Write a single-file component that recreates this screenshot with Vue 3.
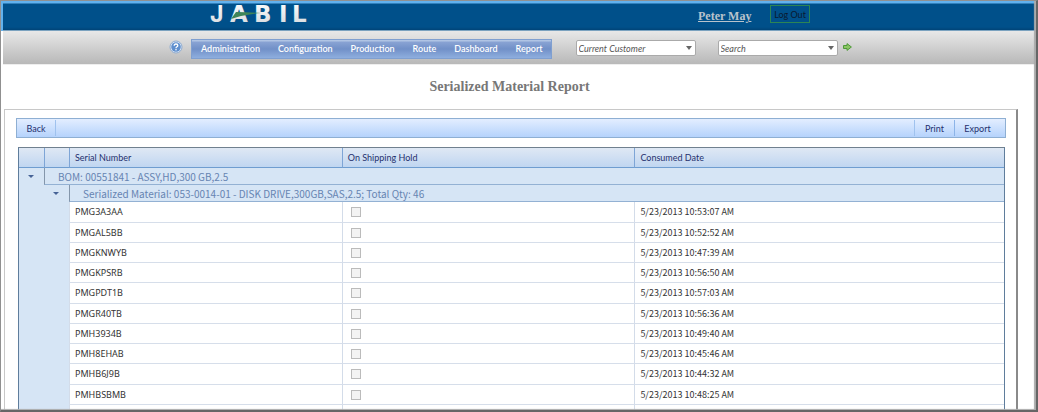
<script setup>
import { ref } from 'vue'

const menu = ['Administration', 'Configuration', 'Production', 'Route', 'Dashboard', 'Report']
const customer = ref('Current Customer')
const search = ref('Search')
const rows = [
  ['PMG3A3AA', '5/23/2013 10:53:07 AM'],
  ['PMGAL5BB', '5/23/2013 10:52:52 AM'],
  ['PMGKNWYB', '5/23/2013 10:47:39 AM'],
  ['PMGKPSRB', '5/23/2013 10:56:50 AM'],
  ['PMGPDT1B', '5/23/2013 10:57:03 AM'],
  ['PMGR40TB', '5/23/2013 10:56:36 AM'],
  ['PMH3934B', '5/23/2013 10:49:40 AM'],
  ['PMH8EHAB', '5/23/2013 10:45:46 AM'],
  ['PMHB6J9B', '5/23/2013 10:44:32 AM'],
  ['PMHBSBMB', '5/23/2013 10:48:25 AM'],
  ['PMHBAGVB', '5/23/2013 10:45:02 AM'],
]
</script>

<template>
  <div class="page">
    <header class="banner">
      <svg class="logo" width="104" height="30" viewBox="0 0 104 30" role="img" aria-label="JABIL">
        <defs>
          <linearGradient id="silver" x1="0" y1="0" x2="0" y2="1">
            <stop offset="0" stop-color="#ffffff" />
            <stop offset="1" stop-color="#d4d8dc" />
          </linearGradient>
        </defs>
        <g fill="url(#silver)">
          <text class="letter round" x="0" y="22">J</text>
          <text class="letter" x="20" y="22">A</text>
          <text class="letter" x="44" y="22">B</text>
          <text class="letter" x="69" y="22">I</text>
          <text class="letter" x="82" y="22">L</text>
        </g>
        <path d="M26 12 Q38 12 51 13 Q36 14 21 19 Z" fill="#3f8558" />
      </svg>
      <a class="user" href="#">Peter May</a>
      <button class="logout" type="button">Log Out</button>
    </header>

    <div class="navbar">
      <button class="help" type="button" aria-label="Help">
        <svg width="14" height="14" viewBox="0 0 14 14" aria-hidden="true">
          <circle cx="7" cy="7" r="6" fill="#e3ecf7" stroke="#8eabd0" />
          <circle cx="7" cy="7" r="4.8" fill="#5f8fce" />
          <path d="M5.2 5.7 Q5.2 4 7 4 Q8.8 4 8.8 5.5 Q8.8 6.4 7.6 7 Q7 7.3 7 8.2" fill="none" stroke="#fff" stroke-width="1.3" />
          <circle cx="7" cy="9.8" r=".8" fill="#fff" />
        </svg>
      </button>
      <nav class="menu">
        <a v-for="item in menu" :key="item" href="#">{{ item }}</a>
      </nav>
      <div class="combo customer">
        <input v-model="customer" type="text" aria-label="Current customer" />
        <button type="button" aria-label="Show customers"><span class="caret"></span></button>
      </div>
      <div class="combo search">
        <input v-model="search" type="text" aria-label="Search" />
        <button type="button" aria-label="Show searches"><span class="caret"></span></button>
      </div>
      <button class="go" type="button" aria-label="Go">
        <svg width="9" height="8" viewBox="0 0 9 8" aria-hidden="true">
          <path d="M.5 2.5 H4 V.6 L8.4 4 L4 7.4 V5.5 H.5 Z" fill="#8cc566" stroke="#4e9a38" />
        </svg>
      </button>
    </div>

    <h1>Serialized Material Report</h1>

    <main class="panel">
      <div class="toolbar">
        <button type="button" class="back">Back</button>
        <button type="button" class="print">Print</button>
        <button type="button" class="export">Export</button>
      </div>

      <table>
        <colgroup>
          <col class="c-arrow" />
          <col class="c-indent" />
          <col class="c-serial" />
          <col class="c-hold" />
          <col />
        </colgroup>
        <thead>
          <tr>
            <th></th>
            <th></th>
            <th scope="col">Serial Number</th>
            <th scope="col">On Shipping Hold</th>
            <th scope="col">Consumed Date</th>
          </tr>
        </thead>
        <tbody>
          <tr class="group">
            <td class="gutter"><button type="button" aria-label="Collapse BOM"><span class="caret small"></span></button></td>
            <td class="label" colspan="4">BOM: 00551841 - ASSY,HD,300 GB,2.5</td>
          </tr>
          <tr class="group">
            <td class="gutter"></td>
            <td class="gutter"><button type="button" aria-label="Collapse material"><span class="caret small"></span></button></td>
            <td class="label" colspan="3">Serialized Material: 053-0014-01 - DISK DRIVE,300GB,SAS,2.5; Total Qty: 46</td>
          </tr>
        </tbody>
        <tbody class="data">
          <tr v-for="[serial, date] in rows" :key="serial">
            <td class="gutter"></td>
            <td class="gutter"></td>
            <td>{{ serial }}</td>
            <td><input type="checkbox" disabled :aria-label="'On shipping hold ' + serial" /></td>
            <td class="date">{{ date }}</td>
          </tr>
        </tbody>
      </table>
    </main>
    <div class="frame" aria-hidden="true"></div>
  </div>
</template>

<style>
body {
  margin: 0;
  background: #fff;
}
</style>

<style scoped>
* {
  box-sizing: border-box;
}
.page {
  height: 100vh;
  overflow: hidden;
  font-family: Lato, "Open Sans", sans-serif;
  font-size: 9px;
  color: #333;
}
button {
  font: inherit;
  color: inherit;
  background: none;
  border: 0;
  padding: 0;
}
.banner {
  display: flex;
  align-items: flex-start;
  height: 31px;
  padding-left: 207px;
  border-left: 3px solid #62b2ee;
  background: linear-gradient(#8c9aa5 0 1px, #62b2ee 1px 3px, #00508a 4px 27px, #004478 30px, #7ba2bf 30px);
}
.logo {
  margin-right: 384px;
  flex: none;
}
.letter {
  font: bold 23px "DejaVu Sans", sans-serif;
}
.letter.round {
  font-family: Inter, "Liberation Sans", sans-serif;
}
.user {
  margin-top: 9px;
  width: 72px;
  font: bold 12px/14px "Liberation Serif", serif;
  color: #b9c3cc;
  white-space: nowrap;
}
.logout {
  height: 18px;
  width: 40px;
  margin-top: 5px;
  border: 1px solid #2c8555;
  color: #0a1a30;
}
.navbar {
  display: flex;
  align-items: center;
  height: 34px;
  margin-left: 3px;
  padding-left: 166px;
  background: linear-gradient(#e8e8e8, #b8b8b8 33px, #eee 33px);
}
.help {
  width: 14px;
  height: 14px;
  margin-bottom: 2px;
}
.help svg,
.go svg {
  display: block;
}
.menu {
  display: flex;
  height: 20px;
  margin: 1px 24px 0 8px;
  padding: 0 0 0 1px;
  border: 1px solid #7f9fd0;
  background: linear-gradient(#b0c4e4 0 1px, #89a3d3 2px, #7190c8 9px, #8eaede);
}
.menu a {
  padding: 0 10px 0 8px;
  line-height: 18px;
  font-weight: 600;
  color: #fff;
  text-decoration: none;
}
.menu a:last-child {
  padding-right: 8px;
}
.combo {
  display: flex;
  width: 120px;
  height: 16px;
  border: 1px solid #aaa;
  border-radius: 2px;
  background: #fff;
}
.search {
  margin-left: 22px;
}
.combo input {
  flex: 1;
  min-width: 0;
  padding: 0 2px;
  border: 0;
  background: none;
  font: italic 9px Lato, "Open Sans", sans-serif;
  color: #555;
}
.combo button {
  width: 12px;
  display: flex;
  align-items: center;
  justify-content: center;
}
.caret {
  border: 3px solid transparent;
  border-top: 4px solid #666;
  border-bottom: 0;
}
.caret.small {
  border-top: 3px solid #466396;
}
.go {
  margin: 0 0 2px 5px;
}
h1 {
  margin: 0;
  padding: 14px 19px 0 0;
  height: 44px;
  font: bold 14px/16px "Liberation Serif", serif;
  color: #777;
  text-align: center;
}
.panel {
  margin: 0 20px 0 4px;
  padding: 8px 10px 0 11px;
  border: 1px solid #c8c8c8;
  border-right: 2px solid #8a8a8a;
}
.toolbar {
  display: flex;
  height: 20px;
  padding: 1px 0;
  border: 1px solid #8eafd3;
  background: linear-gradient(#e3eeff, #b5d3fc);
  color: #25306e;
}
.back {
  width: 39px;
  border-right: 1px solid #9fc2ee;
}
.print {
  width: 40px;
  margin-left: auto;
  border-left: 1px solid #9fc2ee;
}
.export {
  width: 51px;
  padding-right: 5px;
  border-left: 1px solid #8cb4e8;
}
table {
  width: calc(100% - 3px);
  margin: 9px 0 0 2px;
  table-layout: fixed;
  border-collapse: separate;
  border-spacing: 0;
  border: 1px solid #5f7d9c;
  border-top-color: #70808f;
}
.c-arrow,
.c-indent {
  width: 25px;
}
.c-serial {
  width: 27.7%;
}
.c-hold {
  width: 29.7%;
}
th,
td {
  padding: 1px 5px 0;
  line-height: 12px;
  white-space: nowrap;
  text-align: left;
}
th {
  height: 20px;
  font-weight: normal;
  color: #25306e;
  background: linear-gradient(#dfe8f4, #c0d6f1);
  border-bottom: 1px solid #6f9dd0;
  border-left: 1px solid #7ea5d6;
}
th:first-child {
  border-left: 0;
}
.group td {
  height: 17px;
  padding: 1px 14px 0 13px;
  background: #d6e5f5;
  border-left: 1px solid #8496ab;
  border-bottom: 1px solid #93b1d3;
  font-family: "Noto Sans CJK SC", sans-serif;
  font-size: 10px;
  color: #6684b2;
}
.group td.gutter,
.data td.gutter {
  padding: 0;
  background: #d6e5f5;
  border-left: 0;
  border-bottom: 0;
}
.gutter button {
  display: flex;
  width: 24px;
  height: 16px;
  align-items: center;
  justify-content: center;
}
.data td {
  height: 20px;
  padding-top: 0;
  border-left: 1px solid #d3dce9;
  border-bottom: 1px solid #d6deea;
  font-family: "Noto Sans", "Open Sans", sans-serif;
}
.data td.date {
  font-family: "Noto Sans CJK SC", sans-serif;
}
.data tr:nth-child(4n + 1) td {
  height: 21px;
}
.data input {
  appearance: none;
  display: block;
  width: 10px;
  height: 10px;
  margin: 0 0 0 3px;
  border: 1px solid #bbb;
  background: #f3f3f3;
}
.frame {
  position: fixed;
  inset: 0;
  pointer-events: none;
  border: 1px solid #909090;
  border-width: 1px 2px 2px 1px;
  border-right-color: #666;
  border-bottom-color: #666;
  box-shadow: inset -2px -1px 1px #aaa;
}
</style>
